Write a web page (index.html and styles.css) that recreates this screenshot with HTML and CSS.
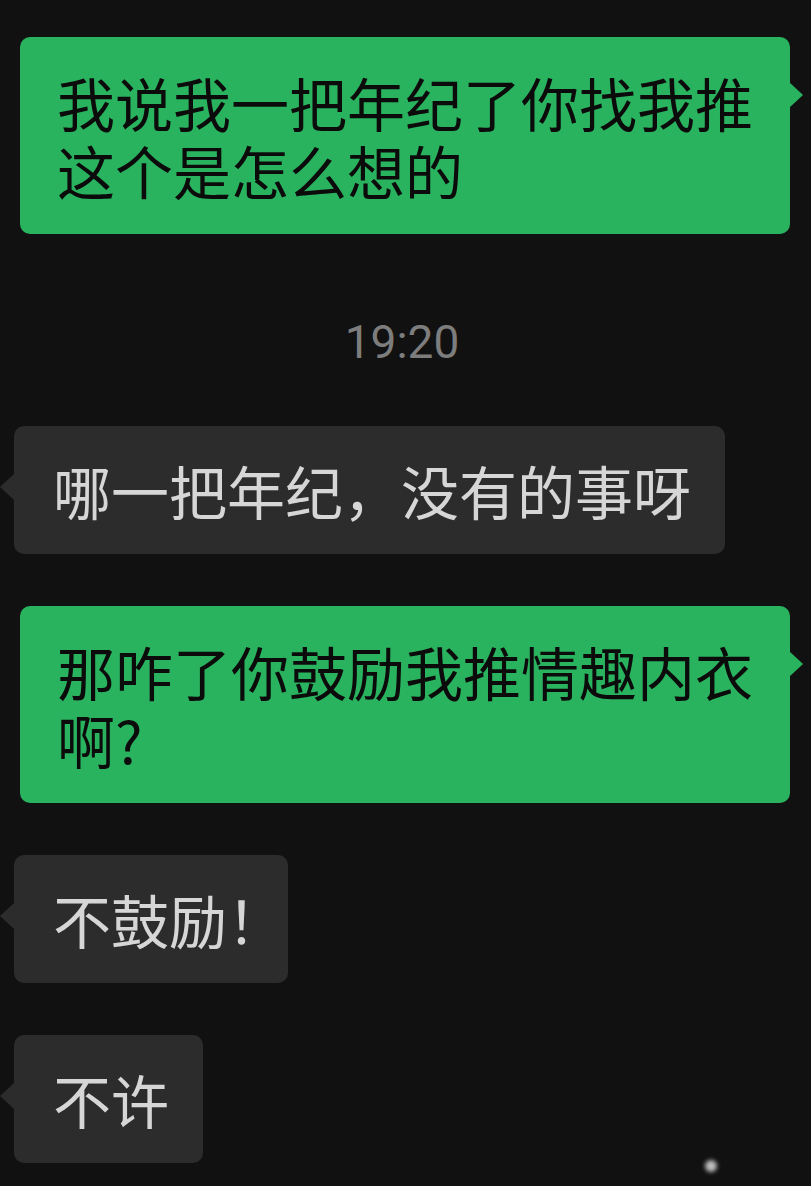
FILE: index.html
```html
<!DOCTYPE html>
<html lang="zh-CN">
<head>
    <meta charset="UTF-8">
    <meta name="viewport" content="width=device-width, initial-scale=1.0">
    <title>聊天</title>
    <link rel="stylesheet" href="styles.css">
</head>
<body>

    <div class="chat">
        <div class="row mine">
            <div class="bubble green">我说我一把年纪了你找我推这个是怎么想的</div>
        </div>

        <div class="time">19:20</div>

        <div class="row theirs">
            <div class="bubble gray">哪一把年纪，没有的事呀</div>
        </div>

        <div class="row mine">
            <div class="bubble green">那咋了你鼓励我推情趣内衣啊?</div>
        </div>

        <div class="row theirs">
            <div class="bubble gray">不鼓励<span class="bang">！</span></div>
        </div>

        <div class="row theirs">
            <div class="bubble gray">不许</div>
        </div>
    </div>

    <div class="mark"></div>

</body>
</html>
```

FILE: styles.css
```css
body {
    margin: 0;
    background-color: #111111;
    font-family: "PingFang SC", "Noto Sans CJK SC", "Noto Sans", sans-serif;
    height: 1186px;
    overflow: hidden;
    position: relative;
}
.chat {
    display: flex;
    flex-direction: column;
    gap: 52px;
    padding: 37px 21px 0 14px;
}
.row {
    display: flex;
}
.mine {
    justify-content: flex-end;
}
.theirs {
    justify-content: flex-start;
}
.bubble {
    position: relative;
    box-sizing: border-box;
    max-width: 770px;
    font-size: 58px;
    line-height: 68px;
    border-radius: 10px;
}
.green {
    background: #2ab35f;
    color: #0b0b0b;
    padding: 31px 36px 30px 37px;
}
.gray {
    background: #2c2c2c;
    color: #d6d6d6;
    padding: 30px 34px 30px 39px;
}
.bang {
    letter-spacing: -31px;
}
.green::after {
    content: "";
    position: absolute;
    right: -13px;
    top: 45px;
    border-top: 13px solid transparent;
    border-bottom: 13px solid transparent;
    border-left: 14px solid #2ab35f;
}
.gray::before {
    content: "";
    position: absolute;
    left: -14px;
    top: 48px;
    border-top: 13px solid transparent;
    border-bottom: 13px solid transparent;
    border-right: 14px solid #2c2c2c;
}
.time {
    text-align: center;
    color: #7d7d7d;
    font-family: Roboto, "Liberation Sans", sans-serif;
    font-size: 46px;
    line-height: 56px;
    margin: 28px 0 4px;
}
.mark {
    position: absolute;
    left: 705px;
    top: 1160px;
    width: 12px;
    height: 12px;
    border-radius: 50%;
    background: #bdbdbd;
    filter: blur(2px);
}
```
